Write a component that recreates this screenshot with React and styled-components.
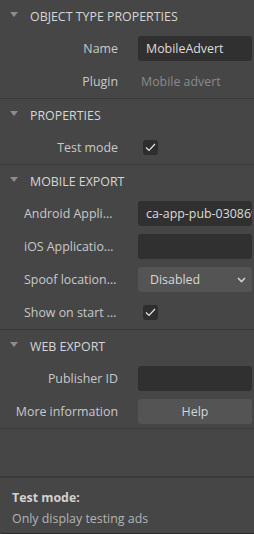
import React from 'react';
import styled, { createGlobalStyle } from 'styled-components';

const GlobalStyle = createGlobalStyle`
  html, body {
    margin: 0;
    padding: 0;
    background: #464646;
  }
  body {
    font-family: "Open Sans", "Noto Sans", "Liberation Sans", sans-serif;
    font-size: 12.4px;
    color: #cfcfcf;
  }
  * { box-sizing: border-box; }
`;

const Panel = styled.div`
  width: 254px;
  height: 534px;
  display: flex;
  flex-direction: column;
  background: #464646;
  border-bottom: 1px solid #2c2c2c;
  border-bottom-left-radius: 3px;
  overflow: hidden;
`;

const Scroll = styled.div`
  flex: 1;
`;

const Section = styled.section`
  border-bottom: 1px solid #3a3a3a;
`;

const Header = styled.div`
  height: 32px;
  display: flex;
  align-items: center;
  padding-left: 10px;
  gap: 12px;
  color: #d6d6d6;
  text-transform: uppercase;
`;

const Caret = styled.span`
  width: 0;
  height: 0;
  border-left: 4px solid transparent;
  border-right: 4px solid transparent;
  border-top: 5px solid #8c8c8c;
  margin-top: -3px;
`;

const Row = styled.div`
  height: 33px;
  display: grid;
  grid-template-columns: 118px 1fr;
  column-gap: 20px;
  align-items: center;
  padding-right: 2px;
`;

const Label = styled.div`
  padding-left: ${p => (p.$indent ? 24 : 8)}px;
  text-align: ${p => (p.$indent ? 'left' : 'right')};
  white-space: nowrap;
  overflow: hidden;
  text-overflow: ellipsis;
  color: #c9c9c9;
`;

const Field = styled.div`
  height: 25px;
  background: #303030;
  border-radius: 3px;
  color: #dcdcdc;
  padding: 0 8px;
  display: flex;
  align-items: center;
  white-space: nowrap;
  overflow: hidden;
`;

const Static = styled.div`
  color: #8a8a8a;
  padding-left: 3px;
`;

const Select = styled.div`
  height: 25px;
  background: #545454;
  border-radius: 3px;
  color: #d6d6d6;
  padding: 0 6px 0 12px;
  display: flex;
  align-items: center;
  justify-content: space-between;
`;

const Button = styled.div`
  height: 25px;
  background: #545454;
  border-radius: 3px;
  color: #d6d6d6;
  display: flex;
  align-items: center;
  justify-content: center;
`;

const Check = styled.div`
  width: 15px;
  height: 15px;
  margin-left: 5px;
  background: #2e2e2e;
  border-radius: 3px;
  display: flex;
  align-items: center;
  justify-content: center;
`;

const Footer = styled.div`
  height: 57px;
  border-top: 2px solid #393939;
  padding: 10px 12px 0;
`;

const FooterTitle = styled.div`
  font-weight: 700;
  color: #d2d2d2;
  line-height: 20px;
`;

const FooterText = styled.div`
  color: #b4b4b4;
  line-height: 22px;
`;

const Tick = () => (
  <Check>
    <svg width="11" height="9" viewBox="0 0 11 9">
      <path d="M1 4.5 L4 7.5 L10 1" fill="none" stroke="#e6e6e6" strokeWidth="1.2" />
    </svg>
  </Check>
);

const Chevron = () => (
  <svg width="9" height="6" viewBox="0 0 9 6">
    <path d="M1 1 L4.5 4.5 L8 1" fill="none" stroke="#cfcfcf" strokeWidth="1.6" />
  </svg>
);

const SectionBlock = ({ title, children }) => (
  <Section>
    <Header>
      <Caret />
      {title}
    </Header>
    {children}
  </Section>
);

export default function App() {
  return (
    <>
      <GlobalStyle />
      <Panel>
        <Scroll>
          <SectionBlock title="Object type properties">
            <Row>
              <Label>Name</Label>
              <Field>MobileAdvert</Field>
            </Row>
            <Row>
              <Label>Plugin</Label>
              <Static>Mobile advert</Static>
            </Row>
          </SectionBlock>
          <SectionBlock title="Properties">
            <Row>
              <Label>Test mode</Label>
              <Tick />
            </Row>
          </SectionBlock>
          <SectionBlock title="Mobile export">
            <Row>
              <Label $indent>Android Application ID</Label>
              <Field>ca-app-pub-030869455</Field>
            </Row>
            <Row>
              <Label $indent>iOS Application ID</Label>
              <Field />
            </Row>
            <Row>
              <Label $indent>Spoof location in EEA</Label>
              <Select>
                Disabled
                <Chevron />
              </Select>
            </Row>
            <Row>
              <Label $indent>Show on start if needed</Label>
              <Tick />
            </Row>
          </SectionBlock>
          <SectionBlock title="Web export">
            <Row>
              <Label>Publisher ID</Label>
              <Field />
            </Row>
            <Row>
              <Label>More information</Label>
              <Button>Help</Button>
            </Row>
          </SectionBlock>
        </Scroll>
        <Footer>
          <FooterTitle>Test mode:</FooterTitle>
          <FooterText>Only display testing ads</FooterText>
        </Footer>
      </Panel>
    </>
  );
}
